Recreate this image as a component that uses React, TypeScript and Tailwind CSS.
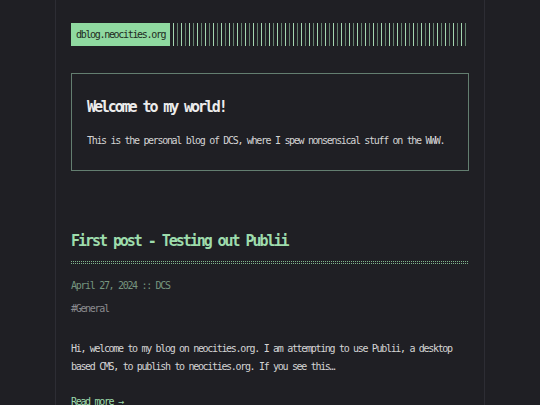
const mono = "font-['DejaVu_Sans_Mono','Liberation_Mono',monospace]";

function Header() {
  return (
    <header className="flex h-[23px]">
      <div className="flex items-center bg-[#8fd9a0] px-[5px] text-[10px] tracking-[-1.32px] text-[#1e2a22]">
        dblog.neocities.org
      </div>
      <div className="ml-[3px] flex-1 bg-[repeating-linear-gradient(90deg,#a3d6b0_0_1px,transparent_1px_4px,#64846f_4px_5px,transparent_5px_8px)]" />
    </header>
  );
}

function Welcome() {
  return (
    <section className="mt-[27px] border border-[#637e70] px-[15px] pt-[23px] pb-[21px]">
      <h1 className="text-[15px] font-bold leading-[20px] tracking-[-2.1px] text-[#ececec]">
        Welcome to my world!
      </h1>
      <p className="mt-[16px] text-[10px] leading-[16px] tracking-[-1.32px] text-[#d4d4d4]">
        This is the personal blog of DCS, where I spew nonsensical stuff on the WWW.
      </p>
    </section>
  );
}

function Post() {
  return (
    <article className="mt-[59px]">
      <h2 className="text-[15px] font-bold leading-[22px] tracking-[-2.05px] text-[#9ddcac]">
        First post - Testing out Publii
      </h2>
      <div className="mt-[9px] flex flex-col gap-[1px]">
        <div className="h-px bg-[repeating-linear-gradient(90deg,#7fb48c_0_1px,transparent_1px_2px)]" />
        <div className="h-px bg-[repeating-linear-gradient(90deg,#7fb48c_0_1px,transparent_1px_2px)]" />
      </div>
      <p className="mt-[14px] text-[10px] leading-[16px] tracking-[-1.32px] text-[#76957f]">
        April 27, 2024 :: DCS
      </p>
      <p className="mt-[7px] text-[10px] leading-[16px] tracking-[-1.32px] text-[#8b8b8f]">
        #General
      </p>
      <p className="mt-[23px] text-[10px] leading-[17.5px] tracking-[-1.32px] text-[#d4d4d4]">
        Hi, welcome to my blog on neocities.org. I am attempting to use Publii, a desktop
        based CMS, to publish to neocities.org. If you see this…
      </p>
      <a href="#" className="mt-[19px] block text-[10px] leading-[16px] tracking-[-1.32px] text-[#9ddcac]">
        Read more →
      </a>
    </article>
  );
}

export default function App() {
  return (
    <div className={`min-h-screen bg-[#1f1f24] ${mono}`}>
      <div className="mx-auto min-h-screen w-[430px] border-x border-[#2d2d34] px-[15px] pt-[23px]">
        <Header />
        <Welcome />
        <Post />
      </div>
    </div>
  );
}
